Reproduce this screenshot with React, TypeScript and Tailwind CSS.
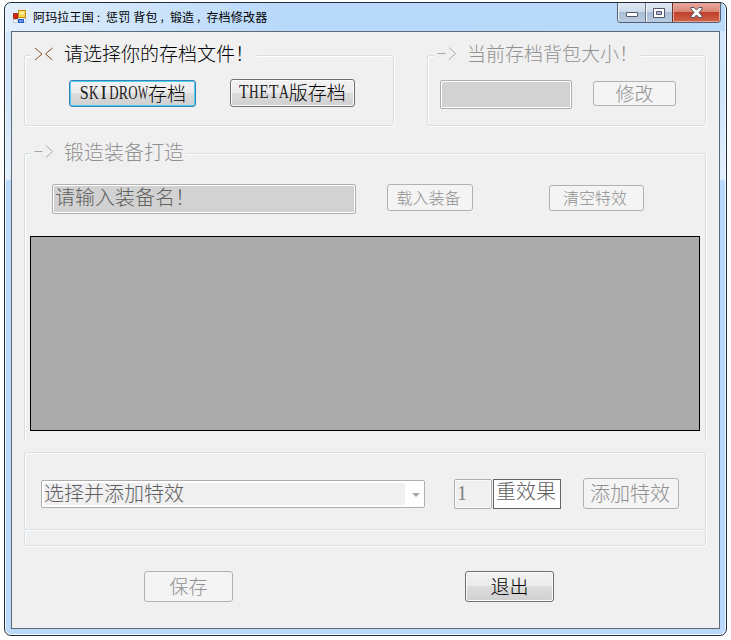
import { ReactNode } from 'react';
import clsx from 'clsx';
import { twMerge } from 'tailwind-merge';

interface WinButtonProps {
  className: string;
  children: ReactNode;
  variant?: 'normal' | 'focused' | 'disabled';
}

const WinButton = ({ className, children, variant = 'normal' }: WinButtonProps) => (
  <button
    disabled={variant === 'disabled'}
    className={clsx(
      'flex shrink-0 items-center justify-center whitespace-nowrap rounded-[3px] border pb-[2px]',
      variant === 'disabled' && 'border-[#adb2b5] bg-[#f4f4f4] text-[#909090]',
      variant === 'normal' &&
        'border-[#707070] bg-[linear-gradient(to_bottom,#f2f2f2,#ebebeb_49%,#dddddd_50%,#cfcfcf)] text-black shadow-[inset_0_0_0_1px_#fbfbfb]',
      variant === 'focused' &&
        'border-[#3c7fb1] bg-[linear-gradient(to_bottom,#f2f2f2,#ebebeb_49%,#dddddd_50%,#cfcfcf)] text-black shadow-[inset_0_0_0_1px_#48d1f5]',
      className,
    )}
  >
    {children}
  </button>
);

// Horizontal squeeze that fits each capital in a half-width cell
const LETTER_SCALE: Record<string, number> = {
  S: 0.85,
  K: 0.7,
  I: 1,
  D: 0.68,
  R: 0.74,
  O: 0.68,
  W: 0.56,
  T: 0.82,
  H: 0.7,
  E: 0.8,
  A: 0.72,
};

const HalfWidth = ({ children }: { children: string }) => (
  <span className="inline-flex font-['Liberation_Serif',serif] text-[19px] text-[#202020]">
    {children.split('').map((letter, i) => (
      <span key={i} className="flex w-[9.9px] justify-center">
        <span style={{ transform: `scaleX(${LETTER_SCALE[letter]})` }}>{letter}</span>
      </span>
    ))}
  </span>
);

const Arrow = ({ kind }: { kind: 'cross' | 'right' }) => (
  <svg
    width="20"
    height="14"
    viewBox="0 0 20 14"
    fill="none"
    className={clsx('shrink-0', kind === 'cross' ? 'text-[#8a4a28]' : 'text-[#a8a8a0]')}
  >
    {kind === 'cross' ? (
      <path d="M1 1l7 6-7 6M18.500 1l-7 6 7 6" stroke="currentColor" />
    ) : (
      <path d="M0.500 6.500h8M12 0.500l6.500 6-6.500 6" stroke="currentColor" />
    )}
  </svg>
);

interface GroupProps {
  className: string;
  legend?: ReactNode;
  children?: ReactNode;
}

const Group = ({ className, legend, children }: GroupProps) => (
  <section
    className={twMerge(
      'shrink-0 rounded-[3px] border border-[#d5dfe5] shadow-[1px_1px_0_#fff,inset_1px_1px_0_#fff]',
      className,
    )}
  >
    {legend}
    {children}
  </section>
);

// Punctuation set a little smaller, towards the middle of its cell
const Mid = ({ children }: { children: string }) => (
  <span className="pl-[2px] text-[10px]">{children}</span>
);

const TitleBar = () => (
  <header className="flex h-7 items-start">
    <div className="flex h-7 items-center pl-[7px]">
      <svg width="14" height="14" viewBox="0 0 14 14" className="shrink-0">
        <path d="M0.500 9.500h4v3h-4zM11.500 8.500h1.500v4h-1.500" fill="#fff" stroke="#b8c4d0" />
        <rect x="5.500" y="0.500" width="7" height="7" fill="#ffd54a" stroke="#c98a08" />
        <rect x="6.500" y="1.500" width="5" height="3" fill="#fff0a0" />
        <rect x="0.500" y="3.500" width="4" height="5" fill="#d8200c" stroke="#a03020" />
        <rect x="5.500" y="9.500" width="5" height="3" fill="#5a98f0" stroke="#2a5cc0" />
      </svg>
      <h1 className="ml-1.5 whitespace-nowrap text-[12px] leading-4 font-normal tracking-[0.18px] text-black">
        阿玛拉王国<Mid>：</Mid>惩罚 背包<Mid>，</Mid>锻造<Mid>，</Mid>存档修改器
      </h1>
    </div>
    <div className="mr-1 ml-auto flex h-5 w-[104px] overflow-hidden rounded-b-[4px] border border-t-0 border-[#56606e]">
      <button className="flex w-7 items-center justify-center border-r border-[#6b7684] bg-[linear-gradient(to_bottom,#dfe9f3,#cddaea_47%,#a9bdd4_50%,#b9cce2)] shadow-[inset_1px_0_0_#eef5fc]">
        <svg width="12" height="5" viewBox="0 0 12 5" className="mt-1">
          <rect x="0.500" y="0.500" width="11" height="4" rx="0.500" fill="#fff" stroke="#535666" />
        </svg>
      </button>
      <button className="flex w-[27px] items-center justify-center border-r border-[#6b3030] bg-[linear-gradient(to_bottom,#dfe9f3,#cddaea_47%,#a9bdd4_50%,#b9cce2)] shadow-[inset_1px_0_0_#eef5fc]">
        <svg width="12" height="10" viewBox="0 0 12 10">
          <path
            fillRule="evenodd"
            d="M0.500 0.500h11v9h-11zM3.500 3.500h5v3h-5z"
            fill="#fff"
            stroke="#535666"
          />
        </svg>
      </button>
      <button className="flex flex-1 items-center justify-center bg-[linear-gradient(to_bottom,#e8ab9f,#d98574_45%,#c0402a_50%,#d0644c)] shadow-[inset_0_0_0_1px_#e6a596]">
        <svg width="13" height="11" viewBox="0 0 13 11">
          <path
            d="M1 0.500h3l2.500 2.500 2.500-2.500h3v1.500L9 5.500l3 3.500v1.500H9L6.500 8 4 10.500H1V9l3-3.500L1 2z"
            fill="#fff"
            stroke="#535666"
          />
        </svg>
      </button>
    </div>
  </header>
);

const App = () => {
  return (
    <div className="h-[640px] w-[731px] bg-white pt-[2px] pl-1 font-['Noto_Sans_CJK_SC',sans-serif] text-[19px] leading-[22px] font-light">
      <div className="flex h-[634px] w-[723px] flex-col rounded-[7px] border border-[#222b38] bg-[linear-gradient(to_bottom,#d3e8fc_0px,#cfe5fb_90px,#e2f0fd_176px,#b9d9fa_178px)] shadow-[inset_0_0_0_1px_#f4faff]">
        <div className="mx-px flex h-7 flex-col rounded-t-[6px] bg-linear-to-r from-[#e2effc] from-0% via-[#b7d8fa] via-40% to-[#b9dafb]">
          <TitleBar />
        </div>
        <main className="mx-[6px] flex h-[598px] flex-col border border-[#5c6b7a] bg-[#f0f0f0] pt-[23px] pl-3">
          <div className="flex">
            <Group
              className="h-[71px] w-[370px]"
              legend={
                <div className="-mt-[14px] ml-[6px] flex h-6 w-[226px] items-center bg-[#f0f0f0] pl-[3px]">
                  <Arrow kind="cross" />
                  <span className="ml-[10px] pb-[2px] whitespace-nowrap">请选择你的存档文件！</span>
                </div>
              }
            >
              <div className="flex items-end pt-[13px] pl-11">
                <WinButton variant="focused" className="h-[27px] w-[127px]">
                  <HalfWidth>SKIDROW</HalfWidth>存档
                </WinButton>
                <WinButton className="ml-[34px] h-7 w-[125px]">
                  <HalfWidth>THETA</HalfWidth>版存档
                </WinButton>
              </div>
            </Group>
            <Group
              className="ml-[33px] h-[71px] w-[279px]"
              legend={
                <div className="-mt-[14px] ml-[6px] flex h-6 w-[207px] items-center bg-[#f0f0f0] pl-[3px] text-[#909090]">
                  <Arrow kind="right" />
                  <span className="ml-[10px] pb-[2px] whitespace-nowrap">当前存档背包大小！</span>
                </div>
              }
            >
              <div className="flex items-start pt-[14px] pl-3">
                <div className="h-[29px] w-[132px] rounded-[2px] border border-[#afafaf] bg-[#d2d2d2] shadow-[inset_0_0_0_1px_#fff]" />
                <WinButton variant="disabled" className="mt-px ml-[21px] h-[25px] w-[83px]">
                  修改
                </WinButton>
              </div>
            </Group>
          </div>

          <Group
            className="mt-[27px] h-72 w-[682px] rounded-b-none border-b-0 shadow-[1px_0_0_#fff,inset_1px_1px_0_#fff]"
            legend={
              <div className="-mt-[14px] ml-[6px] flex h-6 w-[156px] items-center bg-[#f0f0f0] pl-[3px] text-[20px] text-[#909090]">
                <Arrow kind="right" />
                <span className="ml-[10px] pb-px whitespace-nowrap">锻造装备打造</span>
              </div>
            }
          >
            <div className="flex items-start pt-5 pl-[27px] text-[20px]">
              <div className="flex h-[30px] w-[304px] items-center rounded-[2px] border border-[#afafaf] bg-[#d2d2d2] pb-1 pl-[2px] text-[#606060] shadow-[inset_0_0_0_1px_#fff]">
                请输入装备名！
              </div>
              <WinButton variant="disabled" className="ml-[31px] h-[27px] w-[86px] pr-[3px] text-[16px]">
                载入装备
              </WinButton>
              <WinButton
                variant="disabled"
                className="mt-px ml-[76px] h-[26px] w-[95px] pr-[3px] text-[16px]"
              >
                清空特效
              </WinButton>
            </div>
            <div className="mt-[22px] ml-[5px] h-[195px] w-[670px] border border-black bg-[#ababab]" />
          </Group>

          <Group className="mt-[11px] h-[78px] w-[682px]">
            <div className="flex items-start pt-[25px] pl-4 text-[20px] text-[#606060]">
              <div className="mt-[2px] flex h-7 w-96 rounded-[2px] border border-[#afafaf] bg-white p-[2px]">
                <div className="flex w-[361px] items-center bg-[#f0f0f0] pb-[3px]">选择并添加特效</div>
                <svg width="8" height="4" viewBox="0 0 8 4" className="mt-[10px] ml-[7px]">
                  <path d="M0 0h8L4 4z" fill="#a9a9a9" />
                </svg>
              </div>
              <div className="mt-px ml-[29px] flex h-[30px] w-[38px] items-center rounded-[2px] border border-[#afafaf] pb-[3px] pl-[2px] font-['Liberation_Serif',serif] text-[#808080] shadow-[inset_0_0_0_1px_#fafafa]">
                1
              </div>
              <div className="mt-px ml-px flex h-[30px] w-[68px] items-center whitespace-nowrap border border-[#646464] bg-white pb-[7px] pl-[2px]">
                重效果
              </div>
              <WinButton variant="disabled" className="ml-[22px] h-[31px] w-24 pr-[2px]">
                添加特效
              </WinButton>
            </div>
          </Group>
          <Group className="-mt-px h-[17px] w-[682px]" />

          <div className="mt-[25px] flex pl-[120px]">
            <WinButton variant="disabled" className="h-[31px] w-[89px]">
              保存
            </WinButton>
            <WinButton className="ml-[232px] h-[31px] w-[89px]">退出</WinButton>
          </div>
        </main>
      </div>
    </div>
  );
};

export default App;
